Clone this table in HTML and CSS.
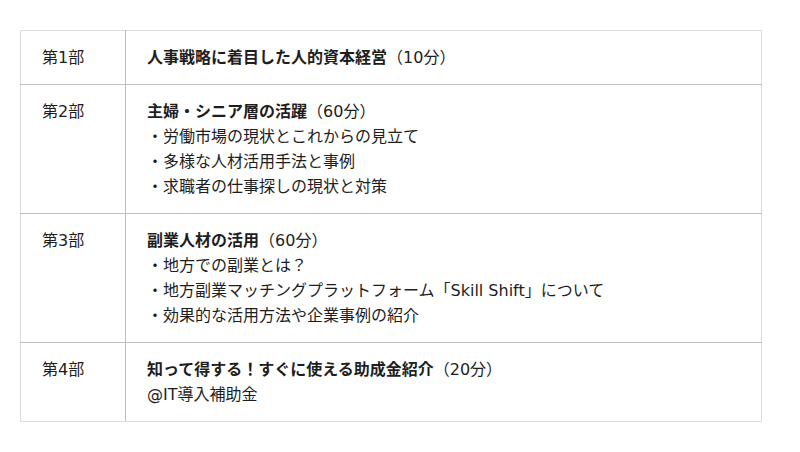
FILE: index.html
```html
<!DOCTYPE html>
<html lang="ja">
<head>
<meta charset="utf-8">
<link rel="stylesheet" href="styles.css">
</head>
<body>
<table class="program">
  <tr>
    <td class="part">第1部</td>
    <td class="content"><span class="title">人事戦略に着目した人的資本経営</span>（10分）</td>
  </tr>
  <tr>
    <td class="part">第2部</td>
    <td class="content"><span class="title">主婦・シニア層の活躍</span>（60分）<br>・労働市場の現状とこれからの見立て<br>・多様な人材活用手法と事例<br>・求職者の仕事探しの現状と対策</td>
  </tr>
  <tr>
    <td class="part">第3部</td>
    <td class="content"><span class="title">副業人材の活用</span>（60分）<br>・地方での副業とは？<br>・地方副業マッチングプラットフォーム「Skill Shift」について<br>・効果的な活用方法や企業事例の紹介</td>
  </tr>
  <tr>
    <td class="part">第4部</td>
    <td class="content"><span class="title">知って得する！すぐに使える助成金紹介</span>（20分）<br>@IT導入補助金</td>
  </tr>
</table>
</body>
</html>
```
FILE: styles.css
```css
html, body {
  margin: 0;
  background: #fff;
}
body {
  padding: 30px 0 0 20px;
  font-family: "DejaVu Sans", "Noto Sans CJK JP", sans-serif;
  font-size: 16px;
  line-height: 25px;
  color: #1e1e1e;
}
.program {
  width: 742px;
  border-collapse: collapse;
  border: 1px solid #dcdcdc;
}
.program td {
  vertical-align: top;
  padding: 14px 0 14px 21px;
  border-bottom: 1px solid #bdbdbd;
}
.program tr:last-child td {
  border-bottom: 1px solid #dcdcdc;
}
.program td.part {
  width: 83px;
  border-right: 1px solid #bdbdbd;
}
.title {
  font-weight: bold;
}
```
